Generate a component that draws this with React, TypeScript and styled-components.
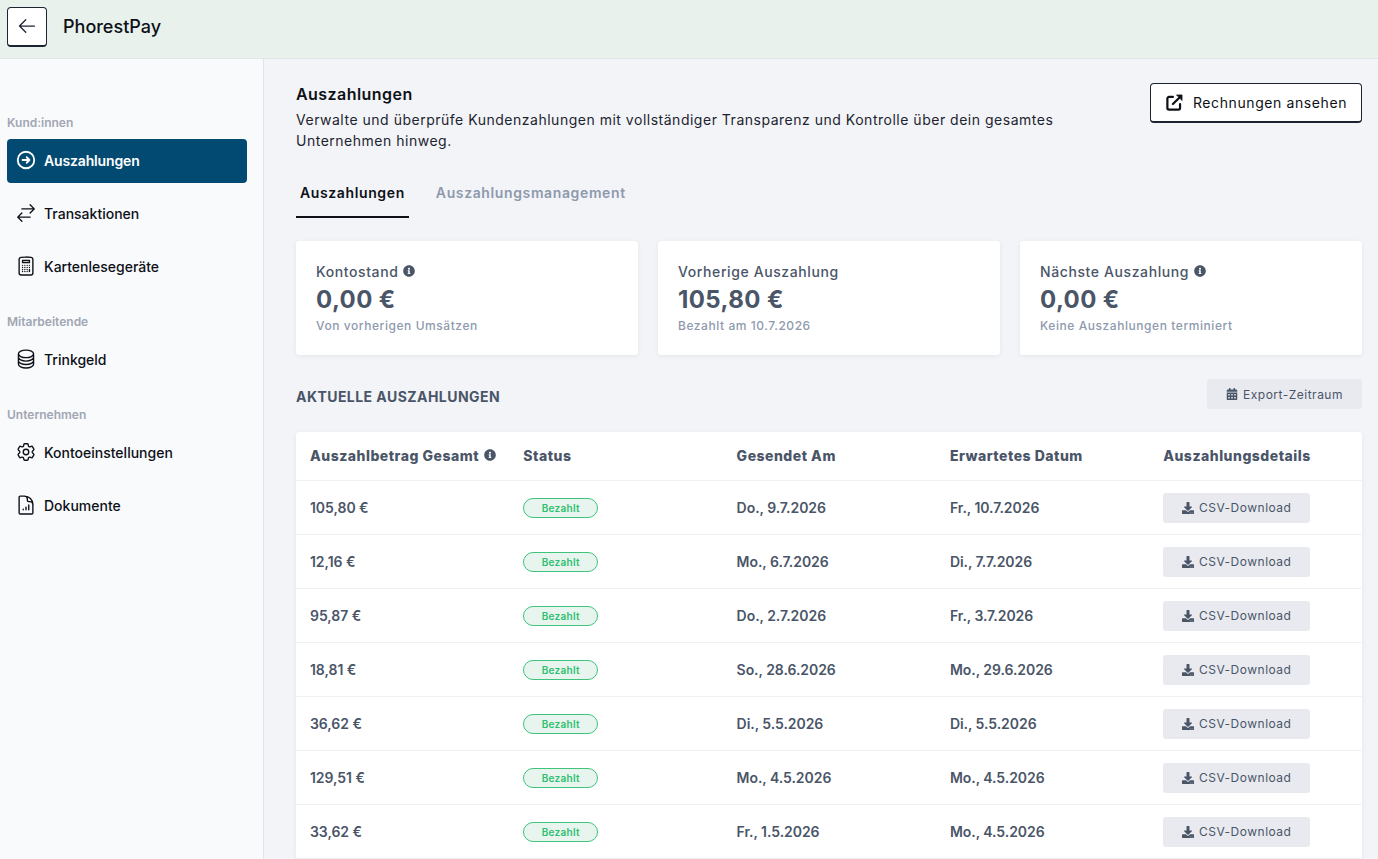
import React from 'react';
import styled, { createGlobalStyle } from 'styled-components';
import {
  HiOutlineArrowLeft,
  HiOutlineArrowRightCircle,
  HiOutlineArrowsRightLeft,
  HiOutlineCalculator,
  HiOutlineCircleStack,
  HiOutlineCog6Tooth,
  HiOutlineDocumentChartBar,
} from 'react-icons/hi2';
import { FaCalendarAlt, FaDownload, FaInfoCircle } from 'react-icons/fa';

const GlobalStyle = createGlobalStyle`
  html, body {
    margin: 0;
    height: 100%;
    overflow: hidden;
    background: #f3f4f7;
    font-family: "Inter", "Liberation Sans", sans-serif;
  }
  * { box-sizing: border-box; }
`;

const Page = styled.div`
  height: 859px;
  display: flex;
  flex-direction: column;
  overflow: hidden;
`;

const Header = styled.header`
  height: 59px;
  flex: none;
  display: flex;
  align-items: center;
  gap: 16px;
  padding: 0 7px 5px;
  background: #e8f1ec;
  border-bottom: 1px solid #e2e5e8;
`;

const BackButton = styled.button`
  width: 40px;
  height: 40px;
  display: flex;
  align-items: center;
  justify-content: center;
  padding: 0;
  background: #fff;
  border: 1px solid #1c2431;
  border-bottom-width: 2px;
  border-radius: 4px;
  color: #1c2431;
  font-size: 20px;
`;

const Brand = styled.span`
  font-size: 18px;
  font-weight: 500;
  color: #0d1117;
`;

const Body = styled.div`
  flex: 1;
  display: flex;
  min-height: 0;
`;

const Sidebar = styled.nav`
  width: 264px;
  flex: none;
  padding: 57px 16px 0 7px;
  background: #f9fafc;
  border-right: 1px solid #e2e5e8;
`;

const GroupLabel = styled.div`
  height: 14px;
  line-height: 14px;
  font-size: 12px;
  font-weight: 600;
  color: #a0a6b3;
`;

const Group = styled.div`
  margin-bottom: 26px;
  ${GroupLabel} {
    margin-bottom: 9px;
  }
`;

const NavItem = styled.div<{ $active?: boolean }>`
  height: 44px;
  display: flex;
  align-items: center;
  gap: 7px;
  padding: 0 0 2px 8px;
  margin-bottom: 9px;
  border-radius: 4px;
  font-size: 14px;
  font-weight: ${(p) => (p.$active ? 600 : 500)};
  letter-spacing: ${(p) => (p.$active ? '-0.15px' : '0')};
  color: ${(p) => (p.$active ? '#fff' : '#0d1117')};
  background: ${(p) => (p.$active ? '#034a72' : 'transparent')};
  svg {
    font-size: 22px;
    flex: none;
  }
  &:last-child {
    margin-bottom: 0;
  }
`;

const Main = styled.main`
  flex: 1;
  min-width: 0;
  padding: 24px 16px 0 32px;
  font-family: "Inter", "Liberation Sans", sans-serif;
  letter-spacing: 0.3px;
`;

const TitleRow = styled.div`
  display: flex;
  justify-content: space-between;
  align-items: flex-start;
`;

const TitleBlock = styled.div`
  width: 790px;
`;

const Title = styled.h1`
  margin: 0 0 4px;
  font-size: 16px;
  line-height: 22px;
  font-weight: 600;
  letter-spacing: 0.45px;
  color: #0d1117;
`;

const Intro = styled.p`
  margin: 0;
  font-size: 14px;
  line-height: 21px;
  letter-spacing: 0.51px;
  color: #1c2431;
`;

const OutlineButton = styled.button`
  width: 212px;
  height: 40px;
  display: flex;
  align-items: center;
  justify-content: center;
  gap: 9px;
  background: #fff;
  border: 1px solid #1c2431;
  border-bottom-width: 2px;
  border-radius: 4px;
  font: inherit;
  font-size: 14px;
  letter-spacing: 0.6px;
  color: #0d1117;
`;

const Tabs = styled.div`
  display: flex;
  gap: 23px;
  margin-top: 18px;
`;

const Tab = styled.div<{ $active?: boolean }>`
  height: 49px;
  display: flex;
  align-items: center;
  padding: 0 4px;
  font-size: 14px;
  font-weight: 600;
  letter-spacing: 0.62px;
  color: ${(p) => (p.$active ? '#0d1117' : '#8e99ae')};
  border-bottom: 2px solid ${(p) => (p.$active ? '#0d1117' : 'transparent')};
`;

const Cards = styled.div`
  display: grid;
  grid-template-columns: repeat(3, 342px);
  gap: 20px;
  margin-top: 23px;
`;

const Card = styled.div`
  height: 114px;
  padding: 20px;
  background: #fff;
  border-radius: 3px;
  box-shadow: 0 1px 4px rgba(60, 70, 90, 0.08);
`;

const CardLabel = styled.div`
  display: flex;
  align-items: center;
  gap: 5px;
  height: 20px;
  font-size: 14px;
  font-weight: 500;
  letter-spacing: 0.6px;
  color: #4a5568;
  svg {
    font-size: 12px;
  }
`;

const CardValue = styled.div`
  margin-top: 3px;
  height: 32px;
  line-height: 32px;
  font-size: 24px;
  font-weight: 700;
  letter-spacing: 0.4px;
  color: #4a5568;
`;

const CardNote = styled.div`
  margin-top: 1px;
  font-size: 12px;
  line-height: 18px;
  font-weight: 500;
  letter-spacing: 0.56px;
  color: #8e99ae;
`;

const SectionRow = styled.div`
  display: flex;
  align-items: center;
  justify-content: space-between;
  margin-top: 24px;
  height: 30px;
`;

const SectionTitle = styled.h2`
  margin: 4px 0 0;
  font-size: 14px;
  font-weight: 700;
  letter-spacing: 0.45px;
  color: #4a5568;
`;

const GreyButton = styled.button<{ $wide?: boolean }>`
  width: ${(p) => (p.$wide ? '155px' : '147px')};
  height: 30px;
  display: flex;
  align-items: center;
  justify-content: center;
  gap: 5px;
  background: #e8eaef;
  border: 0;
  border-radius: 3px;
  font: inherit;
  font-size: 12px;
  font-weight: 400;
  letter-spacing: 0.5px;
  color: #4a5568;
  svg {
    font-size: 12px;
  }
`;

const Table = styled.div`
  margin-top: 23px;
  background: #fff;
  border-radius: 3px;
  box-shadow: 0 1px 4px rgba(60, 70, 90, 0.08);
`;

const Row = styled.div<{ $head?: boolean }>`
  height: ${(p) => (p.$head ? '49px' : '54px')};
  display: grid;
  grid-template-columns: repeat(4, 213.3px) 1fr;
  align-items: center;
  padding: 0 0 ${(p) => (p.$head ? '2px' : '0')} 14px;
  border-bottom: 1px solid #f0f1f4;
  font-size: 14px;
  font-weight: ${(p) => (p.$head ? 800 : 600)};
  letter-spacing: ${(p) => (p.$head ? '0.5px' : '-0.05px')};
  color: #4a5568;
`;

const HeadCell = styled.div`
  display: flex;
  align-items: center;
  gap: 5px;
  svg {
    font-size: 12px;
  }
`;

const Badge = styled.span`
  width: 75px;
  height: 20px;
  display: flex;
  align-items: center;
  justify-content: center;
  background: #e8f5ee;
  border: 1px solid #3ec47c;
  border-radius: 10px;
  font-size: 10px;
  font-weight: 600;
  letter-spacing: 0.3px;
  color: #2fbf71;
`;

const OpenIcon = () => (
  <svg width="19" height="19" viewBox="0 0 24 24" fill="none" stroke="currentColor" strokeWidth="2.8" strokeLinecap="round" strokeLinejoin="round">
    <path d="M10 5H5a2 2 0 0 0-2 2v12a2 2 0 0 0 2 2h12a2 2 0 0 0 2-2v-5" />
    <path d="M10 14l9-9" />
    <path d="M15 2.5h6.5V9z" fill="currentColor" strokeWidth="1" />
  </svg>
);

type Payout = { amount: string; sent: string; expected: string };

const payouts: Payout[] = [
  { amount: '105,80 €', sent: 'Do., 9.7.2026', expected: 'Fr., 10.7.2026' },
  { amount: '12,16 €', sent: 'Mo., 6.7.2026', expected: 'Di., 7.7.2026' },
  { amount: '95,87 €', sent: 'Do., 2.7.2026', expected: 'Fr., 3.7.2026' },
  { amount: '18,81 €', sent: 'So., 28.6.2026', expected: 'Mo., 29.6.2026' },
  { amount: '36,62 €', sent: 'Di., 5.5.2026', expected: 'Di., 5.5.2026' },
  { amount: '129,51 €', sent: 'Mo., 4.5.2026', expected: 'Mo., 4.5.2026' },
  { amount: '33,62 €', sent: 'Fr., 1.5.2026', expected: 'Mo., 4.5.2026' },
];

const App = (): JSX.Element => (
  <Page>
    <GlobalStyle />
    <Header>
      <BackButton aria-label="Zurück">
        <HiOutlineArrowLeft />
      </BackButton>
      <Brand>PhorestPay</Brand>
    </Header>
    <Body>
      <Sidebar>
        <Group>
          <GroupLabel>Kund:innen</GroupLabel>
          <NavItem $active>
            <HiOutlineArrowRightCircle style={{ strokeWidth: 2 }} />
            Auszahlungen
          </NavItem>
          <NavItem>
            <HiOutlineArrowsRightLeft />
            Transaktionen
          </NavItem>
          <NavItem>
            <HiOutlineCalculator />
            Kartenlesegeräte
          </NavItem>
        </Group>
        <Group>
          <GroupLabel>Mitarbeitende</GroupLabel>
          <NavItem>
            <HiOutlineCircleStack />
            Trinkgeld
          </NavItem>
        </Group>
        <Group>
          <GroupLabel>Unternehmen</GroupLabel>
          <NavItem>
            <HiOutlineCog6Tooth />
            Kontoeinstellungen
          </NavItem>
          <NavItem>
            <HiOutlineDocumentChartBar />
            Dokumente
          </NavItem>
        </Group>
      </Sidebar>
      <Main>
        <TitleRow>
          <TitleBlock>
            <Title>Auszahlungen</Title>
            <Intro>
              Verwalte und überprüfe Kundenzahlungen mit vollständiger Transparenz und Kontrolle über
              dein gesamtes Unternehmen hinweg.
            </Intro>
          </TitleBlock>
          <OutlineButton>
            <OpenIcon />
            Rechnungen ansehen
          </OutlineButton>
        </TitleRow>
        <Tabs>
          <Tab $active>Auszahlungen</Tab>
          <Tab>Auszahlungsmanagement</Tab>
        </Tabs>
        <Cards>
          <Card>
            <CardLabel>
              Kontostand <FaInfoCircle />
            </CardLabel>
            <CardValue>0,00 €</CardValue>
            <CardNote>Von vorherigen Umsätzen</CardNote>
          </Card>
          <Card>
            <CardLabel>Vorherige Auszahlung</CardLabel>
            <CardValue>105,80 €</CardValue>
            <CardNote>Bezahlt am 10.7.2026</CardNote>
          </Card>
          <Card>
            <CardLabel>
              Nächste Auszahlung <FaInfoCircle />
            </CardLabel>
            <CardValue>0,00 €</CardValue>
            <CardNote>Keine Auszahlungen terminiert</CardNote>
          </Card>
        </Cards>
        <SectionRow>
          <SectionTitle>AKTUELLE AUSZAHLUNGEN</SectionTitle>
          <GreyButton $wide>
            <FaCalendarAlt />
            Export-Zeitraum
          </GreyButton>
        </SectionRow>
        <Table>
          <Row $head>
            <HeadCell>
              Auszahlbetrag Gesamt <FaInfoCircle />
            </HeadCell>
            <HeadCell>Status</HeadCell>
            <HeadCell>Gesendet Am</HeadCell>
            <HeadCell>Erwartetes Datum</HeadCell>
            <HeadCell>Auszahlungsdetails</HeadCell>
          </Row>
          {payouts.map((p) => (
            <Row key={p.amount}>
              <div>{p.amount}</div>
              <div>
                <Badge>Bezahlt</Badge>
              </div>
              <div>{p.sent}</div>
              <div>{p.expected}</div>
              <GreyButton>
                <FaDownload />
                CSV-Download
              </GreyButton>
            </Row>
          ))}
        </Table>
      </Main>
    </Body>
  </Page>
);

export default App;
